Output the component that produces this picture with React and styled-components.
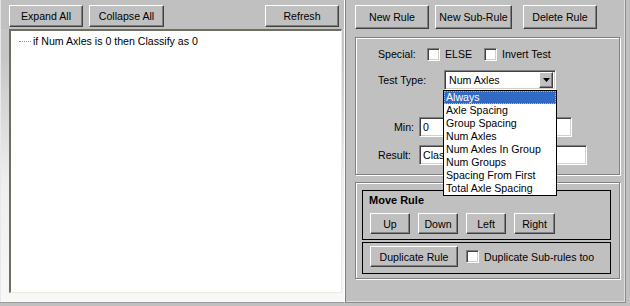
import React from "react";
import styled, { createGlobalStyle } from "styled-components";

const Global = createGlobalStyle`
  html, body { margin: 0; padding: 0; background: #c0c0c0; }
  body { font-family: "Liberation Sans", Arial, sans-serif; font-size: 10.6px; color: #000; }
  * { box-sizing: border-box; }
`;

const Page = styled.div`
  display: flex;
  width: 630px;
  height: 306px;
  background: #c0c0c0;
  overflow: hidden;
`;

const LeftPanel = styled.div`
  width: 344px;
  height: 303px;
  display: flex;
  flex-direction: column;
  box-shadow: inset 1px 0 0 #e4e4e4;
`;

const Toolbar = styled.div`
  display: flex;
  gap: 6px;
  padding: 5px 5px 0 9px;
`;

const Button = styled.button`
  font: inherit;
  color: #000;
  width: ${(p) => p.$w}px;
  height: ${(p) => p.$h || 22}px;
  margin-left: ${(p) => (p.$push ? "auto" : `${p.$ml || 0}px`)};
  background: #c0c0c0;
  border-style: solid;
  border-width: 1px;
  border-color: #fff #404040 #404040 #fff;
  box-shadow: inset -1px -1px 0 #808080;
  padding: 0;
  display: flex;
  align-items: center;
  justify-content: center;
  flex: none;
`;

const TreeWell = styled.div`
  flex: 1;
  margin-top: 2px;
  padding: 0 2px 9px 9px;
  background: linear-gradient(180deg, #c6c6c6 10%, #eeeeee 55%, #f8f8f8 100%);
  box-shadow: inset 1px 0 0 #e8e8e8;
  border-bottom: 1px solid #9c9c9c;
`;

const Tree = styled.div`
  height: 100%;
  background: #fff;
  border-style: solid;
  border-width: 2px 1px 1px 2px;
  border-color: #6e6e62 #ecebdc #ecebdc #6e6e62;
  padding: 3px 0 0 8px;
`;

const TreeItem = styled.div`
  display: flex;
  align-items: center;
  height: 14px;
  gap: 2px;
`;

const Dots = styled.span`
  width: 12px;
  border-top: 1px dotted #8a8a8a;
`;

const RightPanel = styled.div`
  width: 282px;
  height: 303px;
  padding: 5px 0 0 10px;
  border-left: 1px solid #fff;
  box-shadow: inset 1px 0 0 #808080, inset -1px -1px 0 #dcdcdc;
  border-right: 1px solid #8c8c8c;
  border-bottom: 1px solid #8c8c8c;
  display: flex;
  flex-direction: column;
`;

const ButtonRow = styled.div`
  display: flex;
  gap: 6px;
`;

const Group = styled.div`
  width: 265px;
  margin-top: ${(p) => p.$mt}px;
  border: 1px solid #808080;
  box-shadow: inset 1px 1px 0 #fff, 1px 1px 0 #fff;
  padding: ${(p) => p.$pad};
  display: flex;
  flex-direction: column;
  position: relative;
`;

const FormRow = styled.div`
  display: flex;
  align-items: center;
  height: ${(p) => p.$h}px;
  margin-top: ${(p) => p.$mt || 0}px;
`;

const Label = styled.span`
  width: ${(p) => p.$w}px;
  text-align: ${(p) => p.$align || "left"};
  padding-right: ${(p) => (p.$align === "right" ? 5 : 0)}px;
  white-space: nowrap;
  flex: none;
`;

const Check = styled.span`
  width: 13px;
  height: 13px;
  background: #fff;
  border-style: solid;
  border-width: 1px;
  border-color: #808080 #fff #fff #808080;
  box-shadow: inset 1px 1px 0 #404040, inset -1px -1px 0 #d4d0c8;
  flex: none;
  margin-left: ${(p) => p.$ml || 0}px;
`;

const CheckText = styled.span`
  margin-left: 5px;
  width: ${(p) => (p.$w ? `${p.$w}px` : "auto")};
  white-space: nowrap;
`;

const SelectBox = styled.div`
  position: relative;
  width: 112px;
  height: 20px;
  background: #fff;
  border-style: solid;
  border-width: 1px;
  border-color: #808080 #fff #fff #808080;
  box-shadow: inset 1px 1px 0 #404040, inset -1px -1px 0 #d4d0c8;
  display: flex;
  align-items: center;
  padding: 0 2px 0 4px;
`;

const SelectValue = styled.span`
  flex: 1;
`;

const ArrowBtn = styled.span`
  width: 14px;
  height: 16px;
  background: #c0c0c0;
  border-style: solid;
  border-width: 1px;
  border-color: #fff #404040 #404040 #fff;
  box-shadow: inset -1px -1px 0 #808080;
  display: flex;
  align-items: center;
  justify-content: center;
`;

const ListBox = styled.div`
  position: absolute;
  left: -2px;
  top: 19px;
  width: 114px;
  background: #fff;
  border: 1px solid #000;
  z-index: 5;
`;

const ListItem = styled.div`
  height: 13px;
  line-height: 13px;
  padding-left: 2px;
  white-space: nowrap;
  background: ${(p) => (p.$sel ? "#316ac5" : "#fff")};
  color: ${(p) => (p.$sel ? "#fff" : "#000")};
  outline: ${(p) => (p.$sel ? "1px dotted #e8b048" : "none")};
  outline-offset: -1px;
`;

const TextInput = styled.div`
  width: ${(p) => p.$w}px;
  height: 20px;
  background: #fff;
  border-style: solid;
  border-width: 1px;
  border-color: #808080 #fff #fff #808080;
  box-shadow: inset 1px 1px 0 #404040, inset -1px -1px 0 #d4d0c8;
  padding: 0 3px;
  display: flex;
  align-items: center;
  white-space: nowrap;
  overflow: hidden;
`;

const BlackBox = styled.div`
  width: 249px;
  height: ${(p) => p.$h}px;
  margin-top: ${(p) => p.$mt || 0}px;
  border: 1px solid #000;
  padding: ${(p) => p.$pad};
  display: flex;
  flex-direction: column;
`;

const BoxTitle = styled.div`
  font-weight: bold;
  font-size: 11px;
  height: 14px;
  line-height: 14px;
  padding-left: 6px;
`;

const BoxRow = styled.div`
  display: flex;
  align-items: center;
  gap: ${(p) => p.$gap || 0}px;
  margin-top: ${(p) => p.$mt || 0}px;
  padding-left: 7px;
`;

const items = [
  "Always",
  "Axle Spacing",
  "Group Spacing",
  "Num Axles",
  "Num Axles In Group",
  "Num Groups",
  "Spacing From First",
  "Total Axle Spacing",
];

export default function App() {
  return (
    <Page>
      <Global />
      <LeftPanel>
        <Toolbar>
          <Button $w={74}>Expand All</Button>
          <Button $w={75}>Collapse All</Button>
          <Button $w={74} $push>Refresh</Button>
        </Toolbar>
        <TreeWell>
          <Tree>
            <TreeItem>
              <Dots />
              <span>if Num Axles is 0 then Classify as 0</span>
            </TreeItem>
          </Tree>
        </TreeWell>
      </LeftPanel>
      <RightPanel>
        <ButtonRow>
          <Button $w={74} $h={24}>New Rule</Button>
          <Button $w={77} $h={24}>New Sub-Rule</Button>
          <Button $w={74} $h={24} $ml={5}>Delete Rule</Button>
        </ButtonRow>
        <Group $mt={8} $pad="9px 0 9px 22px">
          <FormRow $h={14}>
            <Label $w={49}>Special:</Label>
            <Check />
            <CheckText $w={39}>ELSE</CheckText>
            <Check />
            <CheckText>Invert Test</CheckText>
          </FormRow>
          <FormRow $h={20} $mt={9}>
            <Label $w={66}>Test Type:</Label>
            <SelectBox>
              <SelectValue>Num Axles</SelectValue>
              <ArrowBtn>
                <svg width="7" height="4" viewBox="0 0 7 4">
                  <path d="M0 0h7L3.5 4z" fill="#000" />
                </svg>
              </ArrowBtn>
              <ListBox>
                {items.map((it, i) => (
                  <ListItem key={it} $sel={i === 0}>{it}</ListItem>
                ))}
              </ListBox>
            </SelectBox>
          </FormRow>
          <FormRow $h={20} $mt={27}>
            <Label $w={41} $align="right">Min:</Label>
            <TextInput $w={153}>0</TextInput>
          </FormRow>
          <FormRow $h={20} $mt={8}>
            <Label $w={41}>Result:</Label>
            <TextInput $w={168}>Classify as 0</TextInput>
          </FormRow>
        </Group>
        <Group $mt={7} $pad="7px 0 4px 6px">
          <BlackBox $h={50} $pad="2px 0 0 0">
            <BoxTitle>Move Rule</BoxTitle>
            <BoxRow $mt={6} $gap={8}>
              <Button $w={40} $h={21}>Up</Button>
              <Button $w={40} $h={21}>Down</Button>
              <Button $w={40} $h={21}>Left</Button>
              <Button $w={41} $h={21}>Right</Button>
            </BoxRow>
          </BlackBox>
          <BlackBox $h={32} $mt={2} $pad="3px 0 0 0">
            <BoxRow>
              <Button $w={88} $h={21}>Duplicate Rule</Button>
              <Check $ml={8} />
              <CheckText>Duplicate Sub-rules too</CheckText>
            </BoxRow>
          </BlackBox>
        </Group>
      </RightPanel>
    </Page>
  );
}
